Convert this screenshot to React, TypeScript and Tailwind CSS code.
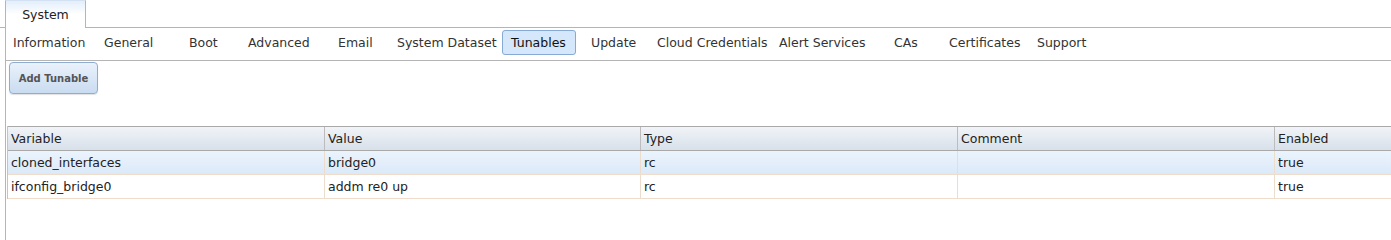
import React from "react";

interface SubTab {
  label: string;
  width: string;
  active?: boolean;
}

interface Tunable {
  variable: string;
  value: string;
  type: string;
  comment: string;
  enabled: string;
}

const subTabs: SubTab[] = [
  { label: "Information", width: "w-[91px]" },
  { label: "General", width: "w-[85px]" },
  { label: "Boot", width: "w-[59px]" },
  { label: "Advanced", width: "w-[90px]" },
  { label: "Email", width: "w-[59px]" },
  { label: "System Dataset", width: "w-[105px]" },
  { label: "Tunables", width: "w-[89px]", active: true },
  { label: "Update", width: "w-[66px]" },
  { label: "Cloud Credentials", width: "w-[122px]" },
  { label: "Alert Services", width: "w-[115px]" },
  { label: "CAs", width: "w-[55px]" },
  { label: "Certificates", width: "w-[88px]" },
  { label: "Support", width: "w-auto" },
];

const tunables: Tunable[] = [
  {
    variable: "cloned_interfaces",
    value: "bridge0",
    type: "rc",
    comment: "",
    enabled: "true",
  },
  {
    variable: "ifconfig_bridge0",
    value: "addm re0 up",
    type: "rc",
    comment: "",
    enabled: "true",
  },
];

const App = () => {
  return (
    <div className="w-full h-[240px] bg-white overflow-hidden font-['DejaVu_Sans',sans-serif] text-[12.5px] text-[#333]">
      {/* top level tab */}
      <div className="flex h-[28px]">
        <div className="w-[5px] border-b border-[#b5b5b5]" />
        <div className="w-[81px] h-[28px] pt-[2px] flex items-center justify-center border-l border-r border-t border-[#b5b5b5] border-t-[#d3e2f3] bg-gradient-to-b from-[#e3eefa] via-white to-white text-[#222]">
          System
        </div>
        <div className="flex-1 border-b border-[#b5b5b5]" />
      </div>

      <div className="ml-[5px] border-l border-[#b5b5b5] h-[212px]">
        {/* sub tabs */}
        <div className="flex items-center h-[33px] pb-[1px] pl-[7px] border-b border-[#b5b5b5]">
          {subTabs.map((tab) => (
            <div key={tab.label} className={`${tab.width} shrink-0 whitespace-nowrap`}>
              {tab.active ? (
                <span className="inline-flex items-center h-[25px] w-[74px] pl-[8px] pt-[1px] mt-[-2px] border border-[#86aad3] rounded-[3px] bg-[#d5e7fa] text-[#111]">
                  {tab.label}
                </span>
              ) : (
                <span>{tab.label}</span>
              )}
            </div>
          ))}
        </div>

        <div className="pt-[1px] pl-[3px]">
          <button className="h-[32px] w-[89px] border border-[#8eadd0] rounded-[4px] bg-gradient-to-b from-[#eaf2fb] to-[#c9dcf0] shadow-[0_1px_1px_rgba(0,0,0,0.12)] text-[10px] font-bold text-[#555]">
            Add Tunable
          </button>
        </div>

        {/* tunables grid */}
        <div className="mt-[32px] ml-[1px] border-l border-[#c4c4c4] text-[#222]">
          <div className="flex h-[25px] border-t border-b border-[#a9a9a9] bg-gradient-to-b from-[#f1f4f8] to-[#d8e0ea]">
            <div className="w-[317px] shrink-0 pl-[3px] pt-[2px] flex items-center border-r border-[#bcbcbc]">Variable</div>
            <div className="w-[316px] shrink-0 pl-[3px] pt-[2px] flex items-center border-r border-[#bcbcbc]">Value</div>
            <div className="w-[317px] shrink-0 pl-[3px] pt-[2px] flex items-center border-r border-[#bcbcbc]">Type</div>
            <div className="w-[317px] shrink-0 pl-[3px] pt-[2px] flex items-center border-r border-[#bcbcbc]">Comment</div>
            <div className="flex-1 pl-[3px] pt-[2px] flex items-center">Enabled</div>
          </div>
          {tunables.map((row, i) => (
            <div
              key={row.variable}
              className={`flex h-[24px] border-b border-[#efdccb] ${
                i === 0 ? "bg-gradient-to-b from-[#ebf4fd] to-[#dbe9f8]" : "bg-white"
              }`}
            >
              <div className="w-[317px] shrink-0 pl-[3px] pt-[2px] flex items-center border-r border-[#ecdccc]">{row.variable}</div>
              <div className="w-[316px] shrink-0 pl-[3px] pt-[2px] flex items-center border-r border-[#ecdccc]">{row.value}</div>
              <div className="w-[317px] shrink-0 pl-[3px] pt-[2px] flex items-center border-r border-[#ecdccc]">{row.type}</div>
              <div className="w-[317px] shrink-0 pl-[3px] pt-[2px] flex items-center border-r border-[#ecdccc]">{row.comment}</div>
              <div className="flex-1 pl-[3px] pt-[2px] flex items-center">{row.enabled}</div>
            </div>
          ))}
        </div>
      </div>
    </div>
  );
};

export default App;
